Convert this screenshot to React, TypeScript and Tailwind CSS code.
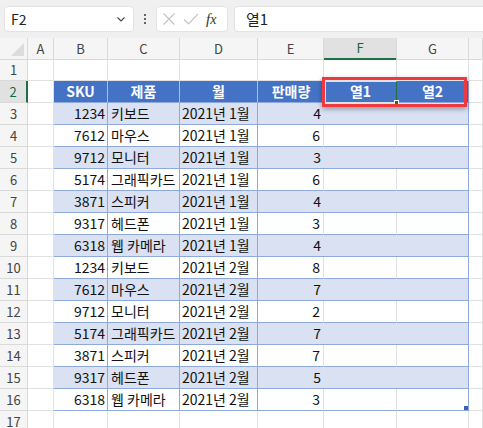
import React from "react";

const COLS = ["A", "B", "C", "D", "E", "F", "G", ""];

const DATA: [string, string, string, string][] = [
  ["1234", "키보드", "2021년 1월", "4"],
  ["7612", "마우스", "2021년 1월", "6"],
  ["9712", "모니터", "2021년 1월", "3"],
  ["5174", "그래픽카드", "2021년 1월", "6"],
  ["3871", "스피커", "2021년 1월", "4"],
  ["9317", "헤드폰", "2021년 1월", "3"],
  ["6318", "웹 카메라", "2021년 1월", "4"],
  ["1234", "키보드", "2021년 2월", "8"],
  ["7612", "마우스", "2021년 2월", "7"],
  ["9712", "모니터", "2021년 2월", "2"],
  ["5174", "그래픽카드", "2021년 2월", "7"],
  ["3871", "스피커", "2021년 2월", "7"],
  ["9317", "헤드폰", "2021년 2월", "5"],
  ["6318", "웹 카메라", "2021년 2월", "3"],
];

const GRID = "grid grid-cols-[28px_26px_54px_72px_78px_66px_73px_72px_1fr]";

const FormulaBar = () => (
  <div className="h-[38px] bg-[#f0f0f0] flex items-center pl-[4px] gap-0">
    <div className="w-[130px] h-[26px] bg-white rounded-[4px] border border-[#e3e3e3] flex items-center justify-between pl-[6px] pr-[6px] text-[14px] text-[#222]">
      <span>F2</span>
      <svg width="12" height="12" viewBox="0 0 12 12" fill="none" stroke="#444" strokeWidth="1.1">
        <path d="M2.5 4.5 L6 8 L9.5 4.5" />
      </svg>
    </div>
    <div className="w-[22px] flex flex-col items-center gap-[2px]">
      <span className="w-[2px] h-[2px] bg-[#333] rounded-full" />
      <span className="w-[2px] h-[2px] bg-[#333] rounded-full" />
      <span className="w-[2px] h-[2px] bg-[#333] rounded-full" />
    </div>
    <div className="w-[72px] h-[26px] bg-white rounded-[4px] border border-[#e3e3e3] flex items-center pl-[5px] gap-[7px]">
      <svg width="14" height="14" viewBox="0 0 14 14" stroke="#c4c4c4" strokeWidth="1.1">
        <path d="M1.5 1.5 L12.5 12.5 M12.5 1.5 L1.5 12.5" />
      </svg>
      <svg width="16" height="14" viewBox="0 0 16 14" fill="none" stroke="#c4c4c4" strokeWidth="1.1">
        <path d="M1 7.5 L5.5 12 L15 2" />
      </svg>
      <span className="text-[15px] italic text-[#333] leading-none font-['Liberation_Serif',serif]">
        f<span className="text-[14px]">x</span>
      </span>
    </div>
    <div className="ml-[6px] flex-1 h-[26px] bg-white rounded-l-[4px] border border-r-0 border-[#e3e3e3] flex items-center pl-[11px] text-[15px] text-[#222]">
      열1
    </div>
  </div>
);

const ColumnHeaders = () => (
  <div className={`${GRID} h-[21px] bg-[#f5f5f5] text-[13px] text-[#444]`}>
    <div className="relative border-r border-b border-[#d9d9d9]">
      <svg className="absolute right-[3px] bottom-[3px]" width="13" height="13" viewBox="0 0 13 13">
        <path d="M13 0 L13 13 L0 13 Z" fill="#dcdcdc" />
      </svg>
    </div>
    {COLS.map((c, i) =>
      c === "F" ? (
        <div key={i} className="flex items-center justify-center bg-[#e1e1e1] text-[#0f6b3a] border-r border-[#d9d9d9] border-b-2 border-b-[#1d7044]">
          {c}
        </div>
      ) : (
        <div key={i} className="flex items-center justify-center border-r border-b border-[#d9d9d9]">
          {c}
        </div>
      )
    )}
  </div>
);

const RowHeader = ({ n }: { n: number }) =>
  n === 2 ? (
    <div className="flex items-center justify-center bg-[#e1e1e1] text-[#0f6b3a] text-[13px] border-b border-[#d9d9d9] border-r-2 border-r-[#1d7044]">
      {n}
    </div>
  ) : (
    <div className="flex items-center justify-center bg-[#f5f5f5] text-[#444] text-[13px] border-r border-b border-[#d9d9d9]">
      {n}
    </div>
  );

const EmptyCell = () => <div className="border-r border-b border-[#e1e1e1]" />;

const HeaderRow = () => (
  <div className={`${GRID} h-[22px]`}>
    <RowHeader n={2} />
    <EmptyCell />
    {["SKU", "제품", "월", "판매량", "열1", "열2"].map((h, i) => (
      <div
        key={i}
        className={`bg-[#4472c4] text-white font-bold text-[14px] flex items-center justify-center border-b border-[#8ea9db] ${i < 3 ? "border-r border-r-[#a9bde6]" : i === 5 ? "border-r border-r-[#8ea9db]" : ""}`}
      >
        {h}
      </div>
    ))}
    <EmptyCell />
  </div>
);

const DataRow = ({ row, n }: { row: [string, string, string, string]; n: number }) => {
  const band = n % 2 === 1;
  const bg = band ? "bg-[#d9e1f2]" : "bg-white";
  const cell = `${bg} border-b border-[#8ea9db] flex items-center text-[14px] text-[#111]`;
  return (
    <div className={`${GRID} h-[22px]`}>
      <RowHeader n={n} />
      <EmptyCell />
      <div className={`${cell} border-r justify-end pr-[2px]`}>{row[0]}</div>
      <div className={`${cell} border-r pl-[3px] whitespace-nowrap`}>{row[1]}</div>
      <div className={`${cell} border-r pl-[2px] whitespace-nowrap`}>{row[2]}</div>
      <div className={`${cell} justify-end pr-[3px] ${band ? "" : "border-r border-r-[#e1e1e1]"}`}>{row[3]}</div>
      <div className={`${cell} ${band ? "" : "border-r border-r-[#e1e1e1]"}`} />
      <div className={`${cell} border-r border-r-[#8ea9db] relative`}>
        {n === 16 && <span className="absolute right-0 bottom-0 w-[4px] h-[4px] bg-[#3f5fb7]" />}
      </div>
      <EmptyCell />
    </div>
  );
};

const BlankRow = ({ n }: { n: number }) => (
  <div className={`${GRID} h-[22px]`}>
    <RowHeader n={n} />
    {COLS.map((_, i) => (
      <EmptyCell key={i} />
    ))}
  </div>
);

export default function App() {
  return (
    <div className="relative w-[483px] h-[428px] overflow-hidden bg-white font-['Noto_Sans_CJK_KR','Noto_Sans',sans-serif]">
      <FormulaBar />
      <ColumnHeaders />
      <BlankRow n={1} />
      <HeaderRow />
      {DATA.map((r, i) => (
        <DataRow key={i} row={r} n={i + 3} />
      ))}
      <BlankRow n={17} />

      {/* selected cell F2 */}
      <div className="absolute left-[325px] top-[81px] w-[72px] h-[22px] border-[1.5px] border-[#d6e3da] border-r-[#1d7044]" />
      <span className="absolute left-[394px] top-[100px] w-[5px] h-[5px] bg-[#1d7044] border border-white" />
      {/* red highlight box */}
      <div className="absolute left-[322px] top-[77px] w-[145px] h-[30px] border-[3px] border-[#ee3a3f] shadow-[0_2px_5px_rgba(0,0,0,0.35)]" />
    </div>
  );
}
